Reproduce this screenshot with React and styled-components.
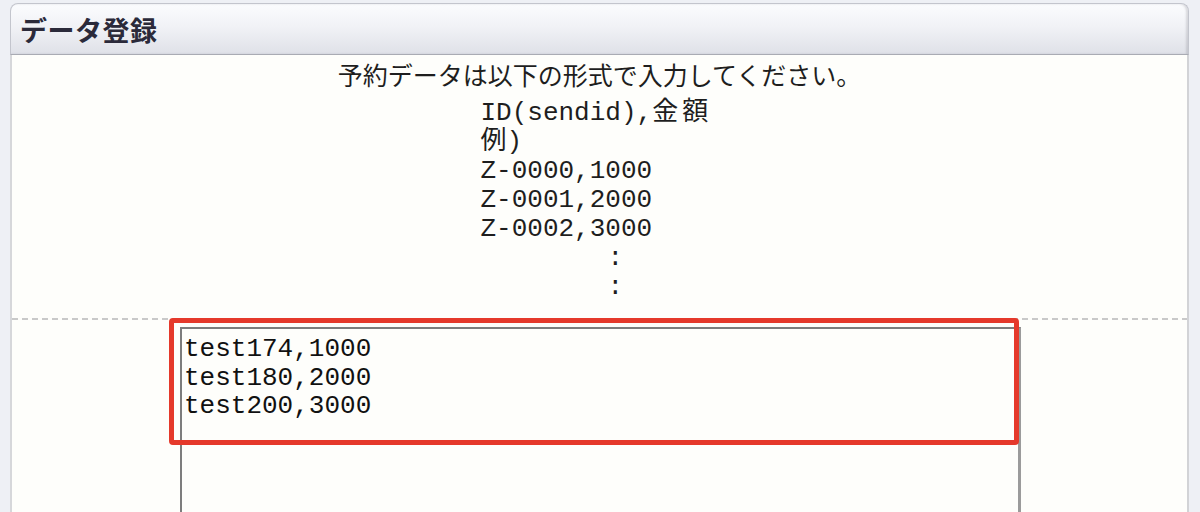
import React from "react";
import styled, { createGlobalStyle } from "styled-components";

const Global = createGlobalStyle`
  html, body {
    margin: 0;
    padding: 0;
    background: #eef0f5;
    overflow: hidden;
  }
  body {
    font-family: "Noto Sans CJK JP", "Liberation Sans", sans-serif;
  }
`;

const Page = styled.div`
  width: 1200px;
  height: 512px;
  box-sizing: border-box;
  padding: 3px 11px 0 10px;
`;

const Panel = styled.section`
  display: flex;
  flex-direction: column;
  height: 509px;
`;

const Header = styled.header`
  flex: 0 0 52px;
  height: 52px;
  box-sizing: border-box;
  display: flex;
  align-items: center;
  padding-left: 9px;
  border: 1px solid #c3c5cd;
  border-bottom-color: #a9abb3;
  border-radius: 8px 8px 0 0;
  background: linear-gradient(to bottom, #fbfcfe 0%, #f1f2f6 45%, #dfe1e8 100%);
  box-shadow: inset -2px 0 2px rgba(80, 80, 90, 0.18);
`;

const Title = styled.h1`
  margin: 0;
  font-family: "Noto Sans CJK JP", sans-serif;
  font-size: 27px;
  font-weight: 700;
  letter-spacing: 0.5px;
  color: #2b2a3a;
  line-height: 1;
`;

const Body = styled.div`
  flex: 1 1 auto;
  min-height: 0;
  overflow: hidden;
  display: flex;
  flex-direction: column;
  background: #fefefb;
  border-left: 2px solid #d6d7da;
  border-right: 2px solid #d2d3d6;
`;

const Instructions = styled.div`
  flex: none;
  display: flex;
  flex-direction: column;
  align-items: center;
  padding-top: 4px;
`;

const Lead = styled.p`
  margin: 0;
  font-family: "Noto Sans CJK JP", sans-serif;
  font-size: 25px;
  line-height: 30px;
  font-weight: 400;
  color: #1e1e1e;
  white-space: nowrap;
`;

const Example = styled.div`
  margin-top: 10px;
  width: 238px;
  font-family: "Liberation Mono", "Noto Sans CJK JP", monospace;
  font-size: 26px;
  line-height: 29px;
  color: #1e1e1e;
  white-space: pre;
`;

const ExampleLine = styled.div`
  height: 29px;
  padding-left: ${(p) => (p.$indent ? "127px" : "0")};
`;

const Wide = styled.span`
  letter-spacing: 4px;
`;

const Separator = styled.div`
  flex: none;
  margin-top: 16px;
  height: 2px;
  background: repeating-linear-gradient(
    to right,
    #c9c9c9 0 6px,
    transparent 6px 10px
  );
`;

const InputArea = styled.div`
  flex: none;
  position: relative;
  margin: 7px 0 0 168px;
  width: 841px;
`;

const DataInput = styled.textarea`
  display: block;
  width: 841px;
  height: 220px;
  box-sizing: border-box;
  margin: 0;
  padding: 6px 3px 4px 2px;
  resize: none;
  overflow: hidden;
  background: #fefefb;
  border-style: solid;
  border-width: 2px 3px 2px 2px;
  border-color: #7d7d7d #9b9b9b #9b9b9b #7d7d7d;
  font-family: "Liberation Mono", monospace;
  font-size: 26px;
  line-height: 28.5px;
  color: #111;
  outline: none;
`;

const Highlight = styled.div`
  position: absolute;
  left: -11px;
  top: -9px;
  width: 850px;
  height: 127px;
  box-sizing: border-box;
  border: 5px solid #e5392b;
  border-radius: 4px;
  pointer-events: none;
`;

const sampleRows = ["Z-0000,1000", "Z-0001,2000", "Z-0002,3000"];

export default function App() {
  return (
    <>
      <Global />
      <Page>
        <Panel>
          <Header>
            <Title>データ登録</Title>
          </Header>
          <Body>
            <Instructions>
              <Lead>予約データは以下の形式で入力してください。</Lead>
              <Example>
                <ExampleLine>
                  ID(sendid),<Wide>金額</Wide>
                </ExampleLine>
                <ExampleLine>例)</ExampleLine>
                {sampleRows.map((l) => (
                  <ExampleLine key={l}>{l}</ExampleLine>
                ))}
                <ExampleLine $indent>:</ExampleLine>
                <ExampleLine $indent>:</ExampleLine>
              </Example>
            </Instructions>
            <Separator />
            <InputArea>
              <DataInput
                readOnly
                defaultValue={"test174,1000\ntest180,2000\ntest200,3000"}
              />
              <Highlight />
            </InputArea>
          </Body>
        </Panel>
      </Page>
    </>
  );
}
